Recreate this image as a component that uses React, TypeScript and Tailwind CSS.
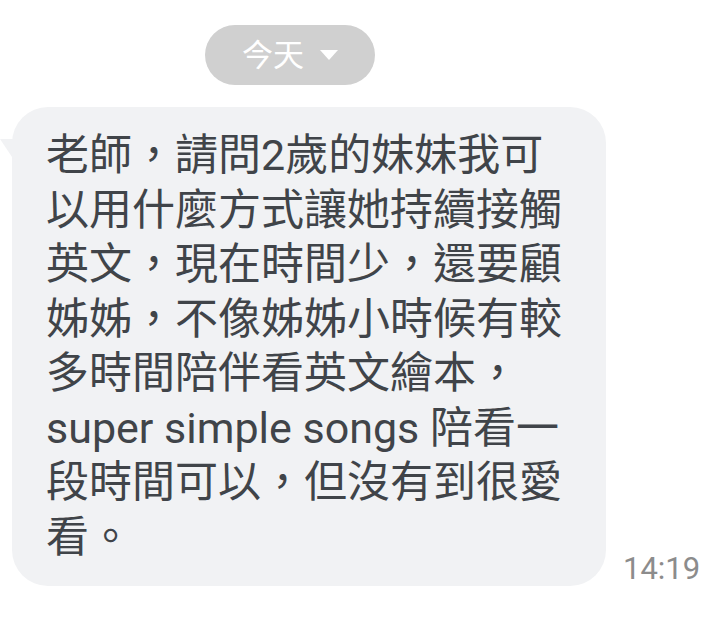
export default function App() {
  const lines = [
    "老師，請問2歲的妹妹我可",
    "以用什麼方式讓她持續接觸",
    "英文，現在時間少，還要顧",
    "姊姊，不像姊姊小時候有較",
    "多時間陪伴看英文繪本，",
    "super simple songs 陪看一",
    "段時間可以，但沒有到很愛",
    "看。",
  ];
  return (
    <div
      className="w-[720px] h-[618px] bg-white overflow-hidden"
      style={{ fontFamily: 'Roboto, "Noto Sans CJK TC", sans-serif' }}
    >
      <div className="pt-[25px] pl-[205px]">
        <div className="w-[170px] h-[60px] rounded-full bg-[#d0d0d0] flex items-center justify-center gap-[16px] text-white">
          <span className="text-[31px] leading-none">今天</span>
          <svg width="18" height="10" viewBox="0 0 18 10">
            <path d="M0 0 L18 0 L9 10 Z" fill="#ffffff" />
          </svg>
        </div>
      </div>

      <div className="flex items-end mt-[22px]">
        <div className="relative ml-[12px] w-[594px] rounded-[36px] bg-[#f1f2f4] pl-[34px] pr-[20px] pt-[21px] pb-[22px]">
          <svg
            className="absolute left-[-12px] top-[32px]"
            width="16"
            height="24"
            viewBox="0 0 16 24"
          >
            <path d="M0 0 L16 0 L16 24 Z" fill="#f1f2f4" />
          </svg>
          <div className="text-[43px] leading-[54.5px] text-[#404449]">
            {lines.map((l) => (
              <div key={l} className="whitespace-nowrap">
                {l}
              </div>
            ))}
          </div>
        </div>
        <div className="ml-[17px] mb-[2px] text-[31px] leading-none text-[#8c8c8c]">
          14:19
        </div>
      </div>
    </div>
  );
}
